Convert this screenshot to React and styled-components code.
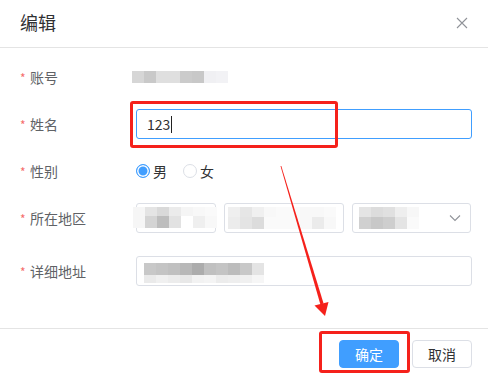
import React from "react";
import styled, { createGlobalStyle } from "styled-components";

const Global = createGlobalStyle`
  html, body { margin: 0; padding: 0; background: #fff; }
  body { font-family: "Microsoft YaHei", "Noto Sans CJK SC", "Noto Sans", sans-serif; }
  * { box-sizing: border-box; }
`;

const Dialog = styled.div`
  position: relative;
  width: 488px;
  height: 378px;
  background: #fff;
  display: flex;
  flex-direction: column;
  overflow: hidden;
`;

const Header = styled.div`
  height: 48px;
  padding: 0 20px 0 20px;
  border-bottom: 1px solid #e4e4e4;
  display: flex;
  align-items: center;
  justify-content: space-between;
`;

const Title = styled.div`
  font-size: 18px;
  line-height: 24px;
  color: #303133;
  margin-top: -3px;
`;

const Close = styled.button`
  border: 0;
  background: none;
  padding: 0;
  width: 12px;
  height: 12px;
  margin-right: 0;
  margin-top: -2px;
  display: flex;
  color: #909399;
`;

const Body = styled.div`
  flex: 1;
  padding: 14px 16px 0 20px;
  display: flex;
  flex-direction: column;
`;

const Row = styled.div`
  display: flex;
  align-items: center;
  height: 30px;
  margin-bottom: ${(p) => p.$gap ?? 17}px;
`;

const Label = styled.div`
  width: 116px;
  flex: none;
  display: flex;
  align-items: center;
  font-size: 14px;
  line-height: 20px;
  color: #606266;
`;

const Star = styled.span`
  color: #f56c6c;
  font-size: 12px;
  width: 10px;
  margin-top: 2px;
`;

const Control = styled.div`
  flex: 1;
  display: flex;
  align-items: center;
  gap: 8px;
`;

const Input = styled.div`
  width: 336px;
  height: 30px;
  border: 1px solid ${(p) => (p.$focus ? "#409eff" : "#dcdfe6")};
  border-radius: 3px;
  padding: 0 0 0 10px;
  display: flex;
  align-items: center;
  font-size: 14px;
  color: #303133;
`;

const Caret = styled.span`
  width: 1px;
  height: 17px;
  background: #222;
  margin-left: 1px;
`;

const Select = styled.div`
  width: ${(p) => p.$w}px;
  height: 30px;
  border: 1px solid #dcdfe6;
  border-radius: 3px;
  display: flex;
  align-items: center;
  padding-left: ${(p) => p.$pl ?? 4}px;
  position: relative;
`;

const Chevron = styled.svg`
  position: absolute;
  right: 9px;
  top: 10px;
`;

const Mosaic = styled.div`
  display: grid;
  grid-template-columns: repeat(${(p) => p.$cols}, 12px);
  grid-auto-rows: ${(p) => p.$rows};
  margin-left: ${(p) => p.$ml ?? 0}px;
  margin-top: ${(p) => p.$mt ?? 0}px;
`;

const Cell = styled.div`
  background: ${(p) => p.$c};
`;

const RadioGroup = styled.div`
  display: flex;
  align-items: center;
  gap: 16px;
`;

const RadioItem = styled.label`
  display: flex;
  align-items: center;
  gap: 3px;
  font-size: 14px;
  color: #303133;
`;

const RadioDot = styled.span`
  width: 14px;
  height: 14px;
  border-radius: 50%;
  border: 1px solid ${(p) => (p.$on ? "#409eff" : "#dcdfe6")};
  background: ${(p) => (p.$on ? "#409eff" : "#fff")};
  box-shadow: ${(p) => (p.$on ? "inset 0 0 0 1.5px #fff" : "none")};
`;

const Footer = styled.div`
  height: 50px;
  border-top: 1px solid #e4e4e4;
  display: flex;
  align-items: center;
  justify-content: flex-end;
  padding-right: 16px;
  gap: 13px;
`;

const Button = styled.button`
  width: 60px;
  height: 28px;
  border-radius: 4px;
  font-family: inherit;
  font-size: 14px;
  padding: 0;
  border: 1px solid ${(p) => (p.$primary ? "#409eff" : "#dcdfe6")};
  background: ${(p) => (p.$primary ? "#409eff" : "#fff")};
  color: ${(p) => (p.$primary ? "#fff" : "#303133")};
  margin-top: 1px;
`;

const RedBox = styled.div`
  position: absolute;
  left: ${(p) => p.$x}px;
  top: ${(p) => p.$y}px;
  width: ${(p) => p.$w}px;
  height: ${(p) => p.$h}px;
  border: 3px solid #f5211b;
  border-radius: 3px;
  pointer-events: none;
`;

const Overlay = styled.svg`
  position: absolute;
  left: 0;
  top: 0;
  pointer-events: none;
`;

const acct = [["#d6d6d6", "#c9c9c9", "#dfdfdf", "#dfdfdf", "#cbcbcb", "#c8c8c8", "#f0f0f3", "#f2f2f5"]];
const sel1 = [
  ["#f6f6f6", "#e4e4e4", "#d9d9d9", "#ebebeb", "#f5f5f5", "#f8f8f8", "#fafafa"],
  ["#f6f6f6", "#d4d4d4", "#bdbdbd", "#e2e2e2", "#ffffff", "#efefef", "#f8f8f8"],
];
const sel2 = [
  ["#efefef", "#e6e6e6", "#f0f0f0", "#f8f8f8", "#fafafa", "#fafafa", "#f8f8f8", "#f8f8f8", "#fafafa"],
  ["#ececec", "#e4e4e4", "#dcdcdc", "#fafafa", "#fafafa", "#fafafa", "#f8f8f8", "#ebebeb", "#f8f8f8"],
];
const sel3 = [
  ["#e4e4e4", "#dcdcdc", "#e0e0e0", "#eeeeee", "#f7f7f7"],
  ["#d0d0d0", "#c8c8c8", "#cecece", "#e4e4e4", "#fafafa"],
];
const addr = [
  ["#c8c8c8", "#c4c4c4", "#c0c0c0", "#b8b8b8", "#acacac", "#c0c0c0", "#c4c4c4", "#bcbcbc", "#c8c8c8", "#e4e4e4"],
  ["#eaeaea", "#f0f0f0", "#ececec", "#e8e8e8", "#f2f2f2", "#f4f4f4", "#ececec", "#eeeeee", "#f0f0f0", "#f6f6f6"],
];

function Blur({ data, rows, ml, mt }) {
  return (
    <Mosaic $cols={data[0].length} $rows={rows} $ml={ml} $mt={mt}>
      {data.flatMap((r, i) => r.map((c, j) => <Cell key={i + "-" + j} $c={c} />))}
    </Mosaic>
  );
}

function FormLabel({ children }) {
  return (
    <Label>
      <Star>*</Star>
      {children}
    </Label>
  );
}

export default function App() {
  return (
    <>
      <Global />
      <Dialog>
        <Header>
          <Title>编辑</Title>
          <Close aria-label="close">
            <svg width="12" height="12" viewBox="0 0 12 12">
              <path d="M1 1L11 11M11 1L1 11" stroke="#909399" strokeWidth="1.1" />
            </svg>
          </Close>
        </Header>
        <Body>
          <Row>
            <FormLabel>账号</FormLabel>
            <Control>
              <Blur data={acct} rows="12px" ml={-4} />
            </Control>
          </Row>
          <Row>
            <FormLabel>姓名</FormLabel>
            <Control>
              <Input $focus>
                123
                <Caret />
              </Input>
            </Control>
          </Row>
          <Row>
            <FormLabel>性别</FormLabel>
            <Control>
              <RadioGroup>
                <RadioItem>
                  <RadioDot $on />男
                </RadioItem>
                <RadioItem>
                  <RadioDot />女
                </RadioItem>
              </RadioGroup>
            </Control>
          </Row>
          <Row $gap={23}>
            <FormLabel>所在地区</FormLabel>
            <Control>
              <Select $w={80} $pl={0}>
                <Blur data={sel1} rows="9px 12px" ml={-4} mt={-1} />
              </Select>
              <Select $w={120} $pl={3}>
                <Blur data={sel2} rows="10px 12px" mt={-1} />
              </Select>
              <Select $w={119} $pl={6}>
                <Blur data={sel3} rows="10px 12px" mt={-1} />
                <Chevron width="12" height="8" viewBox="0 0 12 8">
                  <path d="M1 1.5L6 6.5L11 1.5" fill="none" stroke="#909399" strokeWidth="1.1" />
                </Chevron>
              </Select>
            </Control>
          </Row>
          <Row>
            <FormLabel>详细地址</FormLabel>
            <Control>
              <Input>
                <Blur data={addr} rows="12px 8px" ml={-3} mt={4} />
              </Input>
            </Control>
          </Row>
        </Body>
        <Footer>
          <Button $primary>确定</Button>
          <Button>取消</Button>
        </Footer>
        <RedBox $x={130} $y={101} $w={208} $h={47} />
        <RedBox $x={319} $y={331} $w={91} $h={42} />
        <Overlay width="488" height="378" viewBox="0 0 488 378">
          <polygon points="280.5,166 281.3,166 323.6,303.5 320.4,304.4" fill="#f5211b" />
          <polygon points="314.5,305.5 328.5,302 325,316" fill="#f5211b" />
        </Overlay>
      </Dialog>
    </>
  );
}
